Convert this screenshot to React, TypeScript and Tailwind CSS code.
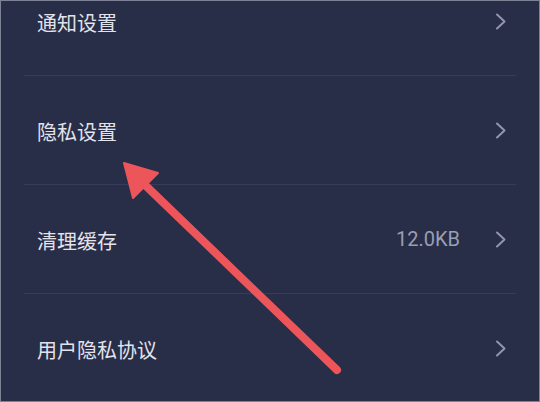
import React from 'react';

type Row = { label: string; value?: string };

const rows: Row[] = [
  { label: '通知设置' },
  { label: '隐私设置' },
  { label: '清理缓存', value: '12.0KB' },
  { label: '用户隐私协议' },
];

const Chevron: React.FC = () => (
  <svg width="14" height="17" viewBox="0 0 14 17" className="shrink-0">
    <path d="M3 1.5 L10.5 8.5 L3 15.5" fill="none" stroke="#9296ab" strokeWidth="2" strokeLinecap="round" strokeLinejoin="round" />
  </svg>
);

const SettingsRow: React.FC<{ row: Row }> = ({ row }) => (
  <div className="mx-[23px] h-[109px] shrink-0 flex items-center border-b border-[#363c59]">
    <span className="pl-[13px] flex-1 text-[20px] leading-none text-[#e2e3ea] pt-[3px]">{row.label}</span>
    {row.value && (
      <span className="mr-[34px] text-[20px] leading-none text-[#9a9eb3] font-['Roboto',sans-serif]">{row.value}</span>
    )}
    <div className="mr-[8px]">
      <Chevron />
    </div>
  </div>
);

const App: React.FC = () => {
  return (
    <div className="relative w-[540px] h-[402px] overflow-hidden bg-[#282d48] border border-[#7d8296] font-['Noto_Sans_CJK_SC','Noto_Sans',sans-serif]">
      <div className="flex flex-col -mt-[34px]">
        {rows.map((r) => (
          <SettingsRow key={r.label} row={r} />
        ))}
      </div>

      {/* red pointer arrow */}
      <svg className="absolute left-0 top-0 pointer-events-none" width="540" height="402" viewBox="0 0 540 402">
        <line x1="336" y1="369" x2="143" y2="183" stroke="#ec565a" strokeWidth="8" strokeLinecap="round" />
        <polygon points="123,162 157,172 132,197" fill="#ec565a" stroke="#ec565a" strokeWidth="2" strokeLinejoin="round" />
      </svg>
    </div>
  );
};

export default App;
